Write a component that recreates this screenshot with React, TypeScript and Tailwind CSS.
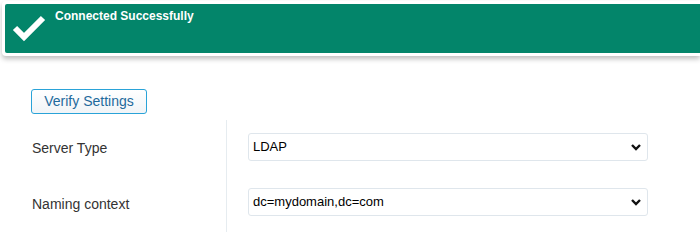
import React from "react";

const Chevron = () => (
  <svg width="10" height="8" viewBox="0 0 10 8" className="shrink-0">
    <path d="M1 2 L5 6 L9 2" fill="none" stroke="#111" strokeWidth="2.4" />
  </svg>
);

const SelectBox = ({ value }: { value: string }) => (
  <div className="flex h-[28px] w-[400px] items-center justify-between rounded-[3px] border border-[#dfe6ec] bg-white pl-[4px] pr-[6px] text-[13px] text-black">
    <span>{value}</span>
    <Chevron />
  </div>
);

export default function App() {
  return (
    <div className="h-[252px] w-[700px] overflow-hidden bg-white font-['Liberation_Sans',Arial,sans-serif]">
      <div className="ml-[2px] mt-[1px] rounded-l-[4px] bg-white pb-[3px] pl-[3px] pt-[3px] shadow-[0_3px_5px_rgba(0,0,0,0.25)]">
        <div className="flex h-[49px] items-start rounded-l-[2px] bg-[#03856a]">
          <svg width="34" height="28" viewBox="0 0 34 28" className="ml-[7px] mt-[10px] shrink-0">
            <path d="M3 14 L12 23 L31 4" fill="none" stroke="#fff" strokeWidth="6" />
          </svg>
          <span className="ml-[9px] mt-[3px] text-[12px] font-bold text-white">Connected Successfully</span>
        </div>
      </div>

      <div className="ml-[31px] mt-[33px]">
        <button className="h-[25px] w-[116px] rounded-[3px] border border-[#2aa3d8] bg-gradient-to-b from-white to-[#f1f4f7] text-[14px] text-[#1f6a9c]">
          Verify Settings
        </button>
      </div>

      <div className="mt-[6px] flex">
        <div className="flex w-[226px] flex-col pl-[32px] text-[14px] text-[#333]">
          <div className="flex h-[56px] items-center pt-[1px]">Server Type</div>
          <div className="flex h-[56px] items-center">Naming context</div>
        </div>
        <div className="flex flex-col border-l border-[#e6ecf0] pl-[21px] pt-[13px]">
          <SelectBox value="LDAP" />
          <div className="mt-[27px]">
            <SelectBox value="dc=mydomain,dc=com" />
          </div>
        </div>
      </div>
    </div>
  );
}
